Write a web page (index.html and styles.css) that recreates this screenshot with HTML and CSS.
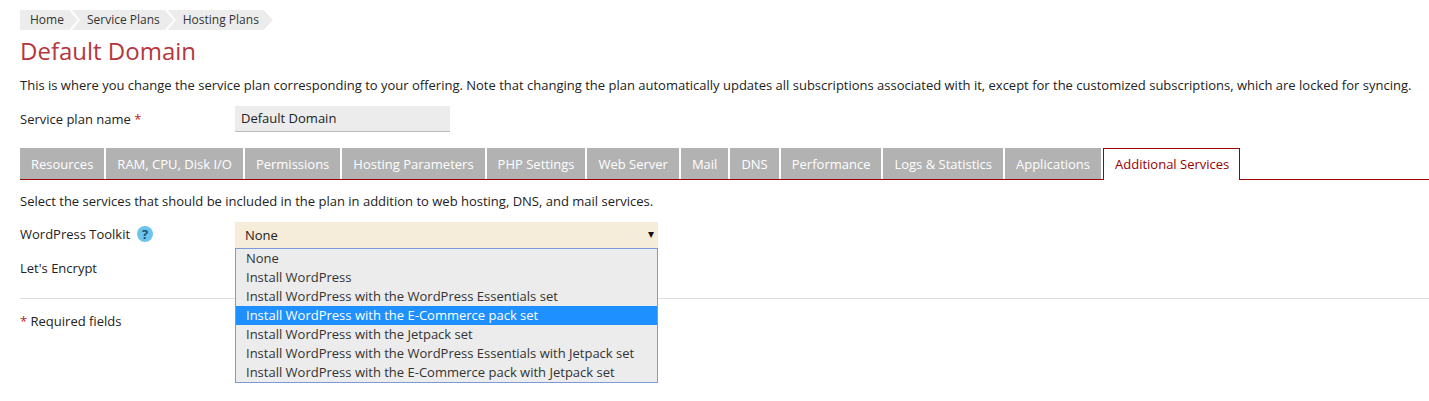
FILE: index.html
```html
<!DOCTYPE html>
<html lang="en">
<head>
<meta charset="utf-8">
<title>Default Domain</title>
<link rel="stylesheet" href="styles.css">
</head>
<body>
<main class="page">
  <nav class="crumbs">
    <a class="crumb crumb-first">Home</a>
    <a class="crumb">Service Plans</a>
    <a class="crumb">Hosting Plans</a>
  </nav>
  <h1 class="title">Default Domain</h1>
  <p class="intro">This is where you change the service plan corresponding to your offering. Note that changing the plan automatically updates all subscriptions associated with it, except for the customized subscriptions, which are locked for syncing.</p>
  <div class="name-row">
    <label class="label">Service plan name <span class="req">*</span></label>
    <div class="input">Default Domain</div>
  </div>
  <div class="tabs">
    <a class="tab">Resources</a>
    <a class="tab">RAM, CPU, Disk I/O</a>
    <a class="tab">Permissions</a>
    <a class="tab">Hosting Parameters</a>
    <a class="tab">PHP Settings</a>
    <a class="tab">Web Server</a>
    <a class="tab">Mail</a>
    <a class="tab">DNS</a>
    <a class="tab">Performance</a>
    <a class="tab">Logs &amp; Statistics</a>
    <a class="tab">Applications</a>
    <a class="tab tab-active">Additional Services</a>
  </div>
  <p class="hint">Select the services that should be included in the plan in addition to web hosting, DNS, and mail services.</p>
  <div class="wp-row">
    <div class="label label-help">WordPress Toolkit
      <svg class="help" width="16" height="16" viewBox="0 0 16 16"><circle cx="8" cy="8" r="8" fill="#6cc3ec"/><text x="8" y="12.8" text-anchor="middle" class="help-mark">?</text></svg>
    </div>
    <div class="select-wrap">
      <div class="select">None<span class="caret">&#9662;</span></div>
      <ul class="menu">
        <li>None</li>
        <li>Install WordPress</li>
        <li>Install WordPress with the WordPress Essentials set</li>
        <li class="selected">Install WordPress with the E-Commerce pack set</li>
        <li>Install WordPress with the Jetpack set</li>
        <li>Install WordPress with the WordPress Essentials with Jetpack set</li>
        <li>Install WordPress with the E-Commerce pack with Jetpack set</li>
      </ul>
    </div>
  </div>
  <div class="label le-row">Let's Encrypt</div>
  <hr class="rule">
  <p class="required"><span class="req">*</span> Required fields</p>
</main>
</body>
</html>
```
FILE: styles.css
```css
* { box-sizing: border-box; }
html, body { margin: 0; padding: 0; background: #fff; }
body { font: 13px/18px "Open Sans", sans-serif; color: #222; height: 401px; overflow: hidden; }
.page { padding: 10px 0 0 20px; }
.crumbs { display: flex; height: 20px; }
.crumb { height: 20px; line-height: 20px; font-size: 12px; color: #333; background: #ececec; padding: 0 14px 0 15px; margin-right: -6px; clip-path: polygon(0 0, calc(100% - 9px) 0, 100% 50%, calc(100% - 9px) 100%, 0 100%, 8px 50%); }
.crumb-first { padding-left: 10px; clip-path: polygon(0 0, calc(100% - 9px) 0, 100% 50%, calc(100% - 9px) 100%, 0 100%); }
.title { margin: 5px 0 0; font-size: 24px; line-height: 32px; font-weight: 400; color: #b5373c; }
.intro { margin: 9px 0 0; height: 18px; white-space: nowrap; }
.name-row { display: flex; align-items: center; margin-top: 12px; }
.label { width: 215px; flex: none; }
.req { color: #b22; }
.input { width: 215px; height: 26px; line-height: 24px; padding-left: 6px; background: #ececec; border-bottom: 1px solid #bbb; }
.tabs { display: flex; gap: 2px; margin: 16px 0 0; height: 32px; border-bottom: 1px solid #990000; }
.tab { height: 31px; padding: 0 11px; line-height: 32px; background: #b2b2b2; color: #fff; }
.tab-active { height: 32px; padding: 0 10px 0 11px; background: #fff; color: #990000; border: 1px solid #990000; border-bottom: 0; line-height: 30px; }
.hint { margin: 12px 0 0; height: 18px; }
.wp-row { display: flex; margin-top: 12px; }
.label-help { display: flex; align-items: center; gap: 7px; height: 24px; }
.help { flex: none; }
.help-mark { font: 700 13px "Open Sans", sans-serif; fill: #1d4f73; }
.select-wrap { position: relative; width: 423px; }
.select { position: relative; height: 27px; line-height: 26px; padding-left: 10px; background: #f5ecd9; border-bottom: 1px solid #8a0000; }
.caret { position: absolute; right: 4px; top: -1px; font-size: 12px; color: #111; }
.menu { position: absolute; left: 0; top: 26px; width: 423px; margin: 0; padding: 0; list-style: none; background: #ececec; border: 1px solid #7a9ad8; z-index: 2; }
.menu li { height: 19px; line-height: 19px; padding-left: 10px; color: #333; }
.menu .selected { background: #1e90ff; color: #fff; }
.le-row { margin-top: 10px; }
.rule { margin: 21px 0 0; border: 0; border-top: 1px solid #ddd; }
.required { margin: 13px 0 0; }
```
